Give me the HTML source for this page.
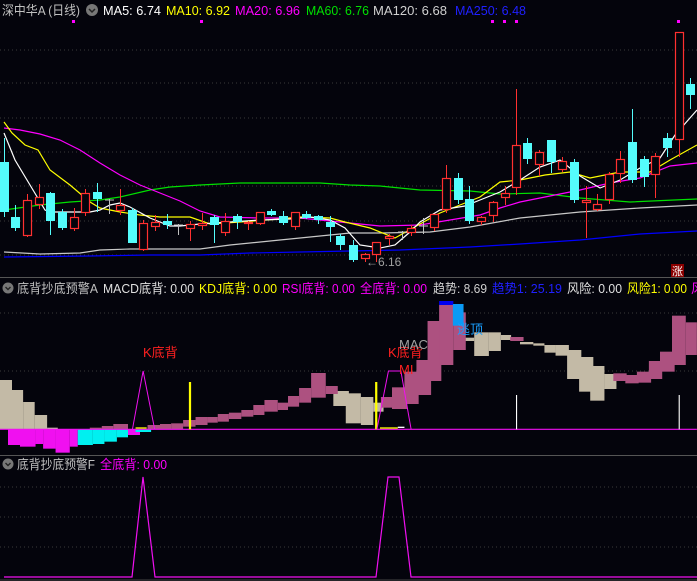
<!DOCTYPE html>
<html><head><meta charset="utf-8"><style>
html,body{margin:0;padding:0;background:#04040c;width:697px;height:581px;overflow:hidden}
svg{display:block;font-family:"Liberation Sans","Noto Sans CJK SC",sans-serif;font-size:13px}
</style></head><body>
<svg id="s" width="697" height="581" viewBox="0 0 697 581" xmlns="http://www.w3.org/2000/svg">
<rect width="697" height="581" fill="#04040c"/>
<g stroke="#3a3a3a" stroke-dasharray="1,3" stroke-width="1">
<line x1="0" y1="50" x2="697" y2="50"/><line x1="0" y1="83" x2="697" y2="83"/><line x1="0" y1="118" x2="697" y2="118"/><line x1="0" y1="152" x2="697" y2="152"/><line x1="0" y1="186" x2="697" y2="186"/><line x1="0" y1="221" x2="697" y2="221"/><line x1="0" y1="255" x2="697" y2="255"/>
<line x1="0" y1="313" x2="697" y2="313"/><line x1="0" y1="371" x2="697" y2="371"/>
<line x1="0" y1="487" x2="697" y2="487"/><line x1="0" y1="517" x2="697" y2="517"/><line x1="0" y1="547" x2="697" y2="547"/>
</g>
<line x1="0" y1="277.5" x2="697" y2="277.5" stroke="#555"/>
<line x1="0" y1="455.5" x2="697" y2="455.5" stroke="#555"/>
<line x1="0" y1="580" x2="697" y2="580" stroke="#444"/>
<g fill="#ff00ff"><rect x="72" y="20" width="3" height="3"/><rect x="200" y="20" width="3" height="3"/><rect x="491" y="20" width="3" height="3"/><rect x="503" y="20" width="3" height="3"/><rect x="515" y="20" width="3" height="3"/><rect x="677" y="20" width="3" height="3"/></g>
<g fill="none" stroke-width="1.2">
<polyline stroke="#0000ff" points="4,257 90,256 150,255 200,255 250,253 300,252 350,251 400,250 470,247 520,244 580,240 640,234 697,231"/>
<polyline stroke="#c8c8c8" points="4,252 40,254 80,253 100,250 130,249 200,249 230,245 280,240 320,236 350,233 380,233 430,232 470,227 520,218 580,212 640,208 697,205"/>
<polyline stroke="#00e000" points="4,210 40,205 70,202 100,200 120,197 150,190 170,187 200,185 240,183 280,183 320,183 350,185 380,186 420,190 470,191 500,194 540,193 580,198 630,202 697,199"/>
<polyline stroke="#ff00ff" points="4,128 20,130 40,134 60,140 80,150 100,163 120,175 140,185 160,193 180,201 200,211 220,217 260,218 300,218 340,222 380,226 420,225 450,220 480,215 500,208 520,202 550,196 580,190 610,183 640,178 670,166 697,163"/>
<polyline stroke="#ffff00" points="4,122 12,133 25,145 38,150 50,170 70,185 90,202 100,208 120,212 140,215 160,217 190,217 210,224 240,222 280,219 300,217 330,218 345,222 370,228 395,238 420,224 440,213 460,205 480,197 500,182 520,180 545,175 570,172 590,178 620,172 650,172 670,160 697,145"/>
<polyline stroke="#ffffff" points="4,133 15,160 30,185 45,210 50,212 70,212 90,212 100,210 110,205 120,203 130,207 150,218 170,226 180,226 200,224 230,222 260,220 290,219 310,217 330,220 345,228 360,245 380,248 395,245 410,232 420,222 440,210 465,206 480,200 500,192 520,180 540,167 560,160 580,176 600,188 620,180 640,168 660,158 675,135 697,110"/>
</g>
<g id="candles"></g>
<text x="366" y="266" fill="#a0a0a0" font-size="12">←6.16</text>
<rect x="671" y="264" width="13" height="13" fill="#8a0000"/><text x="672" y="275" fill="#fff" font-size="11">涨</text>
<g font-size="13">
<text x="2" y="15" fill="#c0c0c0" textLength="78" lengthAdjust="spacingAndGlyphs">深中华A (日线)</text>
<text x="103" y="15" fill="#ffffff" textLength="58" lengthAdjust="spacingAndGlyphs">MA5: 6.74</text>
<text x="166" y="15" fill="#ffff00" textLength="64" lengthAdjust="spacingAndGlyphs">MA10: 6.92</text>
<text x="235" y="15" fill="#ff00ff" textLength="65" lengthAdjust="spacingAndGlyphs">MA20: 6.96</text>
<text x="306" y="15" fill="#00e000" textLength="63" lengthAdjust="spacingAndGlyphs">MA60: 6.76</text>
<text x="373" y="15" fill="#d0d0d0" textLength="74" lengthAdjust="spacingAndGlyphs">MA120: 6.68</text>
<text x="455" y="15" fill="#2020ff" textLength="71" lengthAdjust="spacingAndGlyphs">MA250: 6.48</text>
</g>
<circle cx="92" cy="10" r="6" fill="#777"/><path d="M89,9 L92,12 L95,9" stroke="#222" stroke-width="1.5" fill="none"/>
<g transform="translate(0,300) scale(0.44444,0.33333)">
<g fill="#c3baa6"><rect x="0" y="240" width="27" height="148"/><rect x="27" y="270" width="25" height="118"/><rect x="52" y="306" width="26" height="82"/><rect x="78" y="345" width="28" height="43"/><rect x="106" y="383" width="24" height="5"/>
<rect x="750" y="273" width="35" height="45"/><rect x="778" y="280" width="34" height="90"/><rect x="812" y="291" width="28" height="84"/><rect x="840" y="308" width="23" height="27"/>
<rect x="1040" y="113" width="27" height="10"/><rect x="1067" y="97" width="33" height="71"/><rect x="1100" y="97" width="27" height="56"/><rect x="1127" y="105" width="23" height="15"/>
<rect x="1170" y="126" width="30" height="7"/><rect x="1200" y="130" width="25" height="7"/><rect x="1225" y="135" width="25" height="23"/><rect x="1250" y="135" width="30" height="32"/><rect x="1276" y="150" width="32" height="87"/><rect x="1303" y="171" width="32" height="104"/><rect x="1328" y="198" width="32" height="104"/><rect x="1360" y="222" width="27" height="45"/></g>
<g fill="#f010f0"><rect x="18" y="388" width="27" height="47"/><rect x="45" y="388" width="35" height="52"/><rect x="80" y="388" width="17" height="44"/><rect x="97" y="388" width="28" height="58"/><rect x="125" y="388" width="32" height="70"/><rect x="157" y="388" width="18" height="52"/><rect x="288" y="388" width="27" height="17"/></g>
<g fill="#00f0f0"><rect x="175" y="388" width="34" height="47"/><rect x="209" y="388" width="26" height="44"/><rect x="235" y="388" width="28" height="37"/><rect x="263" y="388" width="25" height="24"/><rect x="305" y="388" width="35" height="8"/></g>
<g fill="#ad5180"><rect x="202" y="383" width="27" height="5"/><rect x="229" y="378" width="26" height="10"/><rect x="255" y="372" width="33" height="16"/><rect x="332" y="375" width="28" height="12"/><rect x="360" y="372" width="25" height="16"/><rect x="385" y="370" width="27" height="18"/><rect x="412" y="360" width="28" height="20"/><rect x="440" y="351" width="27" height="24"/><rect x="467" y="351" width="23" height="17"/><rect x="490" y="342" width="25" height="23"/><rect x="515" y="338" width="28" height="19"/><rect x="543" y="330" width="27" height="20"/><rect x="570" y="315" width="25" height="30"/><rect x="595" y="300" width="30" height="35"/><rect x="625" y="308" width="23" height="22"/><rect x="648" y="288" width="25" height="32"/><rect x="673" y="264" width="27" height="44"/><rect x="700" y="219" width="33" height="74"/><rect x="733" y="258" width="27" height="24"/>
<rect x="857" y="291" width="25" height="32"/><rect x="882" y="262" width="34" height="65"/><rect x="910" y="215" width="32" height="97"/><rect x="937" y="180" width="33" height="105"/><rect x="962" y="63" width="31" height="180"/><rect x="988" y="15" width="32" height="180"/><rect x="1020" y="37" width="28" height="113"/>
<rect x="1148" y="111" width="30" height="12"/>
<rect x="1380" y="220" width="30" height="23"/><rect x="1407" y="225" width="30" height="25"/><rect x="1433" y="215" width="32" height="33"/><rect x="1460" y="183" width="30" height="54"/><rect x="1485" y="155" width="33" height="60"/><rect x="1512" y="47" width="31" height="148"/><rect x="1543" y="67" width="25" height="98"/></g>
<rect x="988" y="3" width="32" height="12" fill="#0000f0"/><rect x="1019" y="12" width="24" height="65" fill="#0a9af5"/>
<line x1="0" y1="388" x2="1568" y2="388" stroke="#f010f0" stroke-width="1.2" vector-effect="non-scaling-stroke"/>
<rect x="425" y="246" width="5" height="142" fill="#ffff00"/><rect x="844" y="246" width="5" height="142" fill="#ffff00"/>
<rect x="1161" y="285" width="2.5" height="103" fill="#fff"/><rect x="1527" y="285" width="2.5" height="103" fill="#fff"/>
<g fill="none" stroke="#f010f0" stroke-width="1"><polyline vector-effect="non-scaling-stroke" points="298,388 322,213 348,388"/><polyline vector-effect="non-scaling-stroke" points="848,388 874,213 902,213 925,388"/></g>
<rect x="305" y="382" width="25" height="4" fill="#ffff00"/><rect x="855" y="382" width="40" height="4" fill="#ffff00"/><rect x="895" y="380" width="15" height="4" fill="#fff"/>
</g>
<text x="143" y="357" fill="#ff2020" font-size="13">K底背</text>
<text x="388" y="357" fill="#ff2020" font-size="13">K底背</text>
<text x="399" y="349" fill="#a0a0a0" font-size="13">MAC</text>
<text x="399" y="374" fill="#ff2020" font-size="13">MI</text>
<text x="457" y="334" fill="#1a9fff" font-size="13">逃顶</text>
<circle cx="8" cy="288" r="5.5" fill="#777"/><path d="M5.5,287 L8,289.5 L10.5,287" stroke="#222" stroke-width="1.4" fill="none"/>
<g font-size="13">
<text x="17" y="293" fill="#c0c0c0" textLength="81" lengthAdjust="spacingAndGlyphs">底背抄底预警A</text>
<text x="103" y="293" fill="#e0e0e0" textLength="91" lengthAdjust="spacingAndGlyphs">MACD底背: 0.00</text>
<text x="199" y="293" fill="#ffff00" textLength="78" lengthAdjust="spacingAndGlyphs">KDJ底背: 0.00</text>
<text x="282" y="293" fill="#ff00ff" textLength="73" lengthAdjust="spacingAndGlyphs">RSI底背: 0.00</text>
<text x="360" y="293" fill="#ff00ff" textLength="67" lengthAdjust="spacingAndGlyphs">全底背: 0.00</text>
<text x="433" y="293" fill="#d0d0d0" textLength="54" lengthAdjust="spacingAndGlyphs">趋势: 8.69</text>
<text x="492" y="293" fill="#2020ff" textLength="70" lengthAdjust="spacingAndGlyphs">趋势1: 25.19</text>
<text x="567" y="293" fill="#e0e0e0" textLength="55" lengthAdjust="spacingAndGlyphs">风险: 0.00</text>
<text x="627" y="293" fill="#ffff00" textLength="60" lengthAdjust="spacingAndGlyphs">风险1: 0.00</text>
<text x="691" y="293" fill="#ff00ff">风</text>
</g>
<circle cx="8" cy="464" r="5.5" fill="#777"/><path d="M5.5,463 L8,465.5 L10.5,463" stroke="#222" stroke-width="1.4" fill="none"/>
<text x="17" y="469" fill="#c0c0c0" font-size="13" textLength="78" lengthAdjust="spacingAndGlyphs">底背抄底预警F</text>
<text x="100" y="469" fill="#ff00ff" font-size="13" textLength="67" lengthAdjust="spacingAndGlyphs">全底背: 0.00</text>
<g fill="none" stroke="#f010f0" stroke-width="1.2"><polyline points="4,577 132,577 143,477 155,577 376,577 388,477 399,477 411,577 697,577"/></g>
</svg>
<script>
var C=[[0,162,212,138,217,'c'],[11,217,228,205,231,'c'],[23,200,236,194,237,'r'],[35,197,205,184,209,'r'],[46,193,221,192,235,'c'],[58,212,228,209,230,'c'],[70,217,229,208,231,'r'],[81,193,213,189,216,'r'],[93,192,199,183,212,'c'],[105,200,201,199,214,'g'],[116,205,211,189,215,'r'],[128,210,243,208,243,'c'],[139,223,250,220,251,'r'],[151,222,227,215,231,'r'],[163,221,225,214,229,'c'],[174,225,226,224,235,'g'],[186,224,229,221,241,'r'],[198,223,226,213,230,'r'],[210,217,225,215,243,'c'],[221,221,233,213,236,'r'],[233,216,222,214,229,'c'],[244,222,224,221,230,'r'],[256,212,224,212,225,'r'],[267,211,215,209,216,'c'],[279,216,223,211,225,'c'],[291,212,227,212,230,'r'],[302,214,218,211,219,'c'],[314,216,220,215,224,'c'],[326,222,227,216,242,'c'],[336,236,245,234,250,'c'],[349,245,260,240,262,'c'],[361,254,259,253,262,'r'],[372,242,255,242,262,'r'],[385,236,239,234,245,'r'],[398,232,233,231,240,'g'],[407,228,233,225,236,'r'],[419,226,227,218,234,'g'],[430,214,228,214,231,'r'],[442,178,210,165,213,'r'],[454,178,200,173,204,'c'],[465,199,221,186,224,'c'],[477,217,222,216,225,'r'],[489,202,216,201,222,'r'],[501,193,198,186,205,'r'],[512,145,188,89,195,'r'],[523,143,159,138,164,'c'],[535,152,165,150,176,'r'],[547,140,162,140,173,'c'],[558,161,170,157,172,'r'],[570,162,200,159,203,'c'],[582,200,203,186,238,'r'],[593,204,210,194,211,'r'],[605,174,200,172,204,'r'],[616,159,174,151,183,'r'],[628,142,180,109,183,'c'],[640,159,177,156,187,'c'],[651,156,175,153,198,'r'],[663,138,148,133,157,'c'],[675,32,140,32,157,'r'],[686,84,95,78,109,'c']];
var h='';C.forEach(function(c){var x=c[0],cx=x+4.5,col=c[5]=='r'?'#ff3030':c[5]=='c'?'#54fcfc':'#c0c0c0';
h+='<line x1="'+cx+'" y1="'+c[3]+'" x2="'+cx+'" y2="'+c[4]+'" stroke="'+col+'" stroke-width="1"/>';
if(c[5]=='r')h+='<rect x="'+(x+0.5)+'" y="'+(c[1]+0.5)+'" width="8" height="'+Math.max(1,c[2]-c[1]-1)+'" fill="#04040c" stroke="'+col+'" stroke-width="1.2"/>';
else if(c[5]=='c')h+='<rect x="'+x+'" y="'+c[1]+'" width="9" height="'+(c[2]-c[1])+'" fill="'+col+'"/>';
else h+='<line x1="'+x+'" y1="'+c[1]+'" x2="'+(x+9)+'" y2="'+c[1]+'" stroke="'+col+'"/>';});
document.getElementById('candles').innerHTML=h;
</script>
</body></html>
